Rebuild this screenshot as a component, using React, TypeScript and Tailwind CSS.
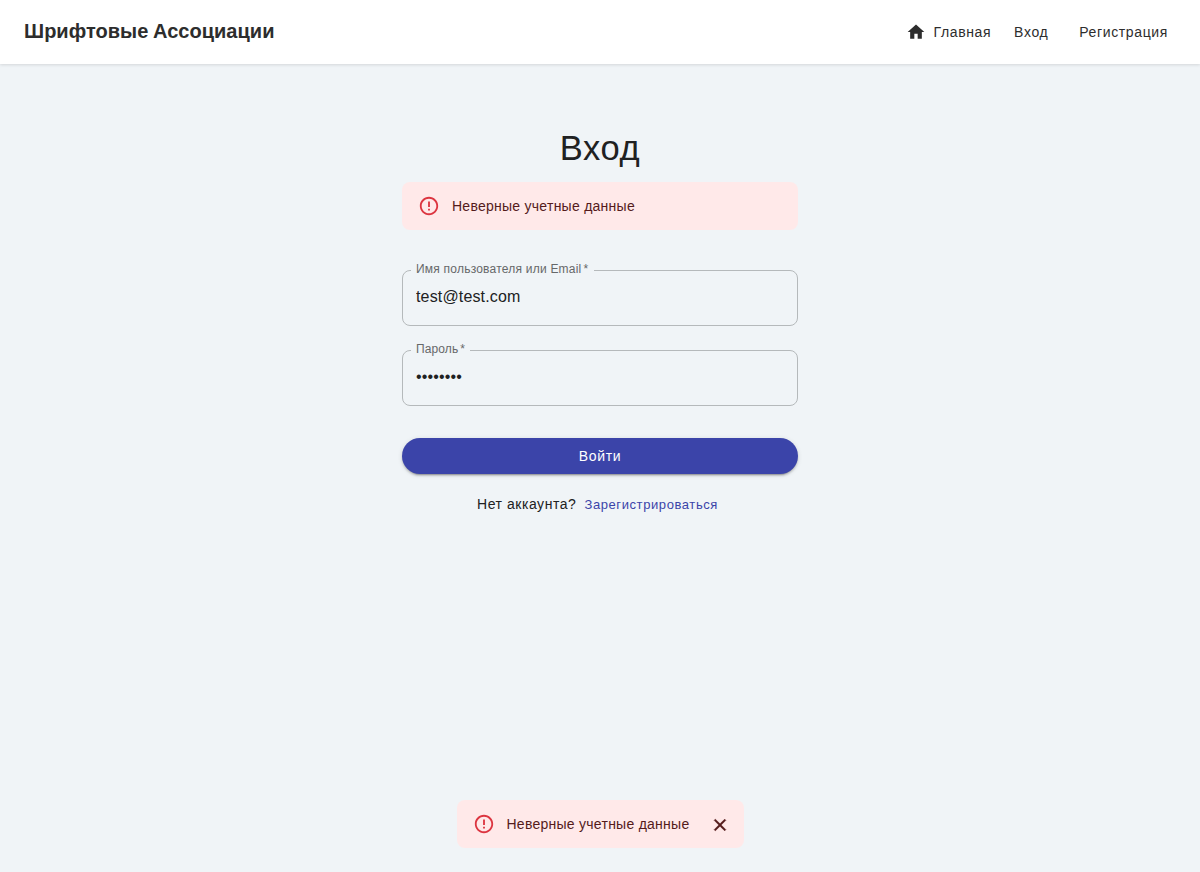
import type { ReactNode } from 'react';

function Icon({ d, className }: { d: string; className: string }) {
  return (
    <svg viewBox="0 0 24 24" fill="currentColor" className={`shrink-0 ${className}`} aria-hidden="true">
      <path d={d} />
    </svg>
  );
}

const HOME = 'M10 20v-6h4v6h5v-8h3L12 3 2 12h3v8z';
const ERROR =
  'M11 15h2v2h-2zm0-8h2v6h-2zm.99-5C6.47 2 2 6.48 2 12s4.47 10 9.99 10C17.52 22 22 17.52 22 12S17.52 2 11.99 2zM12 20c-4.42 0-8-3.58-8-8s3.58-8 8-8 8 3.58 8 8-3.58 8-8 8z';
const CLOSE =
  'M19 6.41L17.59 5 12 10.59 6.41 5 5 6.41 10.59 12 5 17.59 6.41 19 12 13.41 17.59 19 19 17.59 13.41 12z';

function Alert({ children, action }: { children: ReactNode; action?: ReactNode }) {
  return (
    <div role="alert" className="flex h-12 items-center rounded-lg bg-[#ffe9e9] px-4 text-sm tracking-[0.26px] text-[#541b1b]">
      <Icon d={ERROR} className="mr-3 size-[22px] text-[#dc3540]" />
      <span className="whitespace-nowrap">{children}</span>
      {action}
    </div>
  );
}

function Field({ label, type, value, legend, tracking }: { label: string; type: string; value: string; legend: string; tracking: string }) {
  return (
    <label className="relative block h-14">
      <fieldset className="absolute inset-x-0 -top-[5px] bottom-0 rounded-lg border border-[#b5b9bb] px-2">
        <legend className={`h-[11px] ${legend}`} />
      </fieldset>
      <span className={`absolute -top-[9px] left-3.5 whitespace-nowrap text-xs leading-4 text-[#666869] ${tracking}`}>
        {label}
        <span className="ml-0.5">*</span>
      </span>
      <input
        type={type}
        defaultValue={value}
        className="relative block h-[54px] w-full bg-transparent px-3.5 text-base tracking-[0.00938em] text-[#202122] outline-none"
      />
    </label>
  );
}

export default function App() {
  return (
    <div className="flex min-h-screen flex-col bg-[#f0f4f7] font-['Liberation_Sans',Arial,sans-serif] text-[#202122]">
      <header className="flex h-16 items-center justify-between bg-white px-6 text-[#2d2d2d] shadow-[0_1px_3px_rgba(0,0,0,0.12)]">
        <div className="pb-0.5 text-xl font-bold tracking-[0.03px] [word-spacing:-1px]">Шрифтовые Ассоциации</div>
        <nav className="flex items-center text-sm tracking-[0.63px]">
          <a className="flex items-center gap-2 px-2">
            <Icon d={HOME} className="size-5" />
            Главная
          </a>
          <a className="mr-2 w-16 text-center">Вход</a>
          <a className="px-2">Регистрация</a>
        </nav>
      </header>

      <main className="mx-auto flex w-[396px] flex-1 flex-col pt-[63px]">
        <h1 className="mb-[13px] h-[42px] text-center text-[34.5px] leading-[42px] tracking-[0.6px]">Вход</h1>
        <Alert>Неверные учетные данные</Alert>
        <form className="mt-10 flex flex-col gap-6">
          <Field label="Имя пользователя или Email" type="text" value="test@test.com" legend="w-[183px]" tracking="tracking-[0.22px]" />
          <Field label="Пароль" type="password" value="password" legend="w-[59px]" tracking="tracking-[0.11px]" />
          <button
            type="button"
            className="mt-2 h-9 rounded-full bg-[#3b44a9] text-sm tracking-[0.7px] text-white shadow-[0_3px_1px_-2px_rgba(0,0,0,0.2),0_2px_2px_rgba(0,0,0,0.14),0_1px_5px_rgba(0,0,0,0.12)]"
          >
            Войти
          </button>
        </form>
        <div className="mt-5 flex items-center justify-center pl-[3px] text-sm tracking-[0.55px]">
          <span>Нет аккаунта?</span>
          <a className="px-2 pt-0.5 text-[13px] tracking-[0.59px] text-[#3b44a9]">Зарегистрироваться</a>
        </div>
      </main>

      <div className="mx-auto mb-6 w-[287px]">
        <Alert
          action={
            <button type="button" className="-mr-0.5 ml-auto mt-0.5 text-[#541b1b]">
              <Icon d={CLOSE} className="size-5 stroke-current stroke-[0.7]" />
            </button>
          }
        >
          Неверные учетные данные
        </Alert>
      </div>
    </div>
  );
}
